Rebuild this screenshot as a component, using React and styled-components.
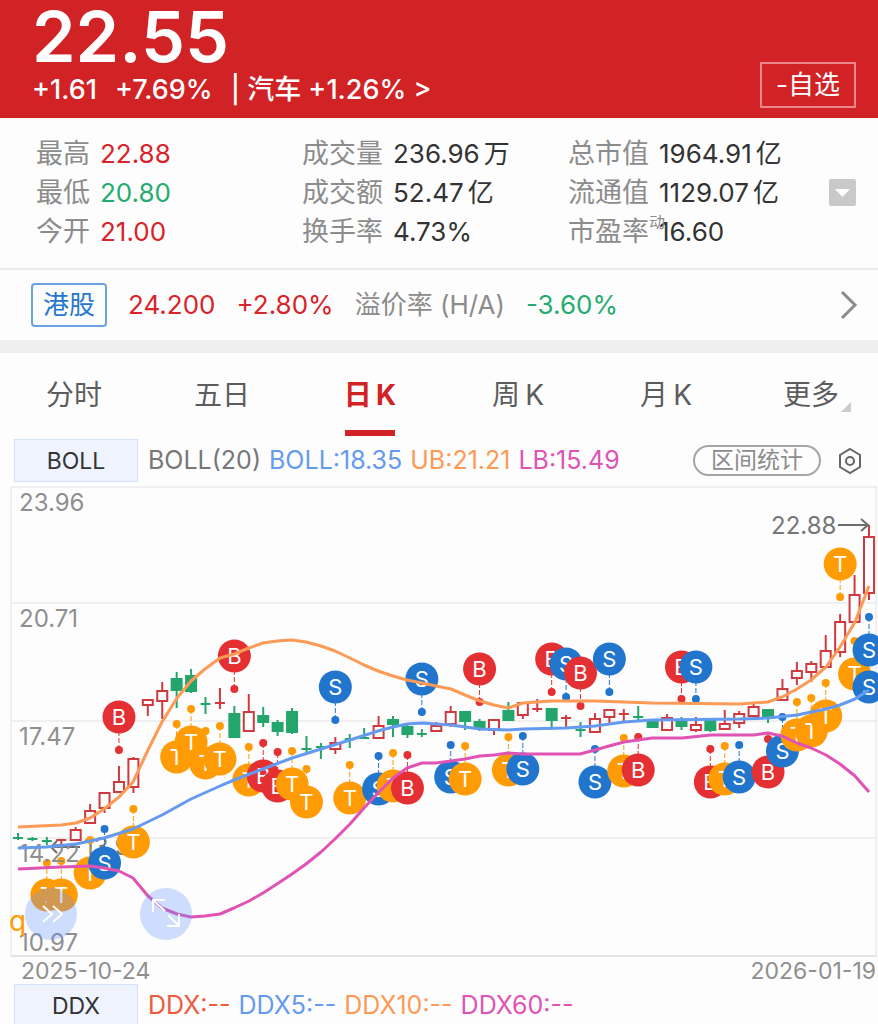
import React from "react";
import styled, { createGlobalStyle } from "styled-components";

const RED = "#cf3a3f";
const GREEN = "#23a56c";

const STATS = [
  [
    { label: "最高", value: "22.88", color: "#d8232a" },
    { label: "最低", value: "20.80", color: "#24ac70" },
    { label: "今开", value: "21.00", color: "#d8232a" },
  ],
  [
    { label: "成交量", value: "236.96", unit: "万" },
    { label: "成交额", value: "52.47", unit: "亿" },
    { label: "换手率", value: "4.73%" },
  ],
  [
    { label: "总市值", value: "1964.91", unit: "亿" },
    { label: "流通值", value: "1129.07", unit: "亿" },
    { label: "市盈率", note: "动", value: "16.60" },
  ],
];

const TABS = ["分时", "五日", "日K", "周K", "月K"];

const GRID = [
  { y: 487, label: "23.96" },
  { y: 603, label: "20.71" },
  { y: 721, label: "17.47" },
  { y: 838, label: "14.22" },
];

// [up, bodyTop, bodyBottom, high, low], one per trading day
const CANDLES = [
  [0, 838, 838, 833, 840],
  [0, 839, 839, 837, 841],
  [0, 841, 841, 837, 845],
  [1, 840, 840, 840, 845],
  [1, 830, 840, 827, 841],
  [1, 811, 823, 804, 823],
  [1, 793, 808, 793, 813],
  [1, 782, 792, 766, 792],
  [1, 759, 787, 757, 793],
  [1, 700, 705, 700, 716],
  [1, 691, 701, 682, 719],
  [0, 679, 690, 672, 708],
  [0, 676, 691, 669, 693],
  [0, 704, 704, 697, 714],
  [1, 703, 703, 688, 709],
  [0, 714, 737, 706, 738],
  [1, 712, 731, 694, 731],
  [0, 716, 722, 707, 727],
  [0, 723, 731, 720, 736],
  [0, 712, 732, 708, 734],
  [0, 749, 749, 736, 753],
  [0, 747, 747, 743, 759],
  [1, 743, 749, 737, 754],
  [0, 739, 739, 734, 748],
  [0, 738, 738, 728, 738],
  [1, 726, 738, 716, 738],
  [0, 720, 724, 716, 737],
  [0, 727, 734, 725, 738],
  [0, 734, 734, 729, 737],
  [1, 726, 731, 722, 732],
  [1, 712, 724, 706, 727],
  [0, 712, 721, 712, 730],
  [0, 722, 727, 719, 731],
  [1, 720, 730, 720, 735],
  [0, 711, 720, 702, 720],
  [1, 703, 715, 702, 719],
  [1, 709, 709, 699, 712],
  [0, 709, 720, 709, 730],
  [1, 718, 718, 715, 727],
  [0, 730, 730, 722, 737],
  [1, 719, 732, 713, 732],
  [1, 710, 717, 709, 723],
  [1, 714, 714, 709, 721],
  [0, 717, 717, 706, 720],
  [0, 721, 727, 719, 728],
  [1, 718, 730, 714, 730],
  [0, 721, 726, 717, 730],
  [1, 725, 730, 717, 732],
  [0, 721, 730, 721, 732],
  [1, 724, 729, 710, 729],
  [1, 714, 723, 711, 728],
  [1, 707, 716, 704, 719],
  [0, 710, 718, 710, 723],
  [1, 689, 700, 679, 701],
  [1, 671, 678, 662, 685],
  [1, 664, 672, 661, 682],
  [1, 651, 667, 635, 667],
  [1, 622, 652, 614, 657],
  [1, 595, 622, 575, 622],
  [1, 537, 593, 525, 600],
];

// [kind, day, badge y, dot y]
const MARKERS = [
  ["T", 2, 895, 863],
  ["T", 3, 895, 861],
  ["T", 5, 873, 840],
  ["S", 6, 863, 829],
  ["B", 7, 717, 750],
  ["T", 8, 842, 809],
  ["T", 11, 757, 724],
  ["T", 12, 742, 709],
  ["T", 13, 763, 731],
  ["T", 14, 759, 726],
  ["B", 15, 656, 689],
  ["T", 16, 780, 747],
  ["B", 17, 776, 743],
  ["B", 18, 786, 752],
  ["T", 19, 784, 751],
  ["T", 20, 802, 769],
  ["S", 22, 687, 720],
  ["T", 23, 798, 765],
  ["S", 25, 789, 756],
  ["T", 26, 786, 753],
  ["B", 27, 788, 755],
  ["S", 28, 679, 712],
  ["S", 30, 777, 745],
  ["T", 31, 779, 746],
  ["B", 32, 669, 702],
  ["T", 34, 770, 737],
  ["S", 35, 769, 736],
  ["B", 37, 659, 692],
  ["S", 38, 664, 697],
  ["B", 39, 673, 706],
  ["S", 40, 782, 749],
  ["S", 41, 659, 692],
  ["T", 42, 771, 738],
  ["B", 43, 770, 737],
  ["B", 46, 667, 699],
  ["S", 47, 667, 699],
  ["B", 48, 782, 749],
  ["T", 49, 779, 746],
  ["S", 50, 777, 745],
  ["B", 52, 772, 739],
  ["S", 53, 751, 717],
  ["T", 54, 735, 702],
  ["T", 55, 731, 698],
  ["T", 56, 716, 683],
  ["T", 57, 564, 597],
  ["T", 58, 674, 641],
  ["S", 59, 650, 617],
  ["S", 59, 687, 676],
];

const MARKER_COLORS = { B: "#e43033", S: "#2275cd", T: "#ff9b05" };

const BANDS = [
  {
    color: "#649af0",
    points:
      "18,848 46,847 76,844 104,838 133,829 162,815 191,799 220,786 234,780 263,769 292,758 321,749 350,740 378,731 393,727 407,724 422,723 451,725 480,729 508,730 523,729 566,728 595,726 624,722 652,720 740,719 768,718 797,715 826,709 840,705 855,699 869,690",
  },
  {
    color: "#fd9a55",
    points:
      "18,827 61,825 76,823 90,818 104,809 119,797 133,782 148,750 162,722 177,698 191,681 205,669 220,658 234,654 249,648 263,643 277,641 292,640 306,642 321,646 335,651 350,658 364,665 378,671 393,676 407,680 422,683 436,686 451,689 465,695 480,701 494,705 508,708 523,703 551,701 595,701 652,703 740,704 768,702 782,697 797,689 811,680 826,667 840,647 855,622 869,586",
  },
  {
    color: "#e053b5",
    points:
      "18,869 61,867 90,866 104,868 119,871 133,878 148,896 162,908 177,914 191,917 205,916 220,914 234,908 249,901 263,893 277,884 292,874 306,864 321,852 335,839 350,824 364,808 378,793 393,778 407,768 422,763 436,763 451,761 465,759 480,756 494,755 508,753 523,754 580,754 595,750 609,746 624,742 638,740 652,738 682,738 711,735 754,735 768,733 782,736 797,743 811,748 826,755 840,764 855,776 869,792",
  },
];

const dayX = (i) => 18 + (i * 851) / 59;

const Candle = ({ day, data }) => {
  const [up, top, bottom, high, low] = data;
  const x = dayX(day);
  const color = up ? RED : GREEN;
  const flat = top === bottom;
  return (
    <g stroke={color} strokeWidth="2">
      <line x1={x} x2={x} y1={high} y2={flat ? low : top} />
      {flat ? (
        <line x1={x - 5} x2={x + 5} y1={top} y2={top} />
      ) : (
        <>
          <line x1={x} x2={x} y1={bottom} y2={low} />
          <rect x={x - 5} y={top} width="10" height={bottom - top} fill={up ? "#fdfdfd" : GREEN} />
        </>
      )}
    </g>
  );
};

const Marker = ({ kind, day, y, dot }) => {
  const x = dayX(day);
  const color = MARKER_COLORS[kind];
  return (
    <g fill={color}>
      <line x1={x} x2={x} y1={y} y2={dot} stroke={color} strokeDasharray="5 2" />
      <circle cx={x} cy={dot} r="4" />
      <circle cx={x} cy={y} r="16.500" />
      <MarkerText x={x} y={y + 8}>
        {kind}
      </MarkerText>
    </g>
  );
};

class App extends React.Component {
  state = { tab: "日K" };

  renderChart() {
    return (
      <ChartArea>
        <ChartSvg viewBox="0 486 878 472" role="img" aria-label="日K BOLL">
          <g stroke="#e3e3e5">
            {GRID.map((g) => (
              <line key={g.y} x1="11" x2="877" y1={g.y} y2={g.y} />
            ))}
            <line x1="11" x2="877" y1="956" y2="956" strokeWidth="2" />
            <line x1="11" x2="11" y1="487" y2="956" />
            <line x1="876" x2="876" y1="487" y2="956" />
          </g>
          {CANDLES.map((c, i) => (
            <Candle key={i} day={i} data={c} />
          ))}
          <g stroke="#6c6c6c" strokeWidth="2" fill="none">
            <path d="M838 525H868M861 519L868 525L861 531" />
            <path d="M80 847H51M57 841L51 847L57 853" />
          </g>
          <AxisText x="771" y="534" fill="#777">22.88</AxisText>
          <AxisText x="84" y="855" fill="#777">13.97</AxisText>
          {MARKERS.map(([kind, day, y, dot], i) => (
            <Marker key={i} kind={kind} day={day} y={y} dot={dot} />
          ))}
          {GRID.map((g) => (
            <AxisText key={g.label} x="19" y={g.y + 24}>
              {g.label}
            </AxisText>
          ))}
          <AxisText x="19" y="951">10.97</AxisText>
          <ClippedMark x="9" y="931">q</ClippedMark>
          {BANDS.map((b) => (
            <polyline
              key={b.color}
              points={b.points}
              fill="none"
              stroke={b.color}
              strokeWidth="3"
              strokeLinejoin="round"
            />
          ))}
        </ChartSvg>
        <ChartTools>
          <RoundButton aria-label="展开">
            <svg width="52" height="52" fill="none" stroke="#fff" strokeWidth="2">
              <path d="M18 18L27 26L18 34M28 18L37 26L28 34" />
            </svg>
          </RoundButton>
          <RoundButton aria-label="全屏">
            <svg width="52" height="52" fill="none" stroke="#fff" strokeWidth="2">
              <path d="M13 24V12H25M13 12L25 23M28 27L39 38M39 26V38H27" />
            </svg>
          </RoundButton>
        </ChartTools>
      </ChartArea>
    );
  }

  render() {
    const { tab } = this.state;
    return (
      <Page>
        <GlobalStyle />
        <Header>
          <div>
            <Price>22.55</Price>
            <Change>
              <span>+1.61</span>
              <span>+7.69%</span>
              <Sector href="#sector">| 汽车 +1.26% &gt;</Sector>
            </Change>
          </div>
          <WatchButton>-自选</WatchButton>
        </Header>

        <Stats>
          <StatGrid>
            {STATS.map((col, i) => (
              <div key={i}>
                {col.map((s) => (
                  <Stat key={s.label}>
                    <StatLabel>
                      {s.label}
                      {s.note && <Note>{s.note}</Note>}
                    </StatLabel>
                    <StatValue $color={s.color}>
                      {s.value}
                      {s.unit && <Unit>{s.unit}</Unit>}
                    </StatValue>
                  </Stat>
                ))}
              </div>
            ))}
          </StatGrid>
          <MoreButton aria-label="更多数据">
            <svg width="27" height="27">
              <path d="M6 10H21L13.500 18Z" fill="#fff" />
            </svg>
          </MoreButton>
        </Stats>

        <HkRow href="#hk">
          <HkBadge>港股</HkBadge>
          <Quote $color="#d8232a">24.200</Quote>
          <Quote $color="#d8232a">+2.80%</Quote>
          <Quote $color="#8c8c8c">溢价率 (H/A)</Quote>
          <Quote $color="#24ac70">-3.60%</Quote>
          <Chevron width="18" height="30" fill="none" stroke="#8c8c8c" strokeWidth="3">
            <path d="M2 2L15 15L2 28" />
          </Chevron>
        </HkRow>

        <Tabs>
          {TABS.map((t) => (
            <Tab key={t} $active={t === tab} onClick={() => this.setState({ tab: t })}>
              {t.replace("K", "\u2009K")}
            </Tab>
          ))}
          <MoreTab>
            更多
            <Corner />
          </MoreTab>
        </Tabs>

        <IndicatorRow>
          <IndicatorButton>BOLL</IndicatorButton>
          <Legend>
            <LegendItem $color="#777">BOLL(20)</LegendItem>
            <LegendItem $color="#649af0">BOLL:18.35</LegendItem>
            <LegendItem $color="#fd9a55">UB:21.21</LegendItem>
            <LegendItem $color="#e053b5">LB:15.49</LegendItem>
          </Legend>
          <RangeButton>区间统计</RangeButton>
          <SettingsButton aria-label="设置">
            <svg width="26" height="28" fill="none" stroke="#666" strokeWidth="2">
              <path d="M13 2L23 8V20L13 26L3 20V8Z" />
              <circle cx="13" cy="14" r="4" />
            </svg>
          </SettingsButton>
        </IndicatorRow>

        {this.renderChart()}

        <Dates>
          <span>2025-10-24</span>
          <span>2026-01-19</span>
        </Dates>

        <DdxRow>
          <IndicatorButton>DDX</IndicatorButton>
          <Legend>
            <LegendItem $color="#ee5a3c">DDX:--</LegendItem>
            <LegendItem $color="#649af0">DDX5:--</LegendItem>
            <LegendItem $color="#fd9a55">DDX10:--</LegendItem>
            <LegendItem $color="#e053b5">DDX60:--</LegendItem>
          </Legend>
        </DdxRow>
      </Page>
    );
  }
}

export default App;

const GlobalStyle = createGlobalStyle`
  * {
    box-sizing: border-box;
  }
  body {
    margin: 0;
    background: #fdfdfd;
    font-family: Inter, "Noto Sans CJK SC", sans-serif;
  }
  button {
    margin: 0;
    padding: 0;
    border: 0;
    background: none;
    font-family: inherit;
    cursor: pointer;
  }
  a {
    color: inherit;
    text-decoration: none;
  }
`;

const Page = styled.main`
  width: 100%;
`;

const Header = styled.header`
  display: flex;
  justify-content: space-between;
  align-items: flex-end;
  padding: 2px 22px 10px 32px;
  background: #d12326;
  color: #fff;
`;

const Price = styled.div`
  font-size: 70px;
  font-weight: 600;
  line-height: 70px;
`;

const Change = styled.div`
  display: flex;
  gap: 18px;
  font-size: 27px;
  font-weight: 500;
  line-height: 36px;
  white-space: nowrap;
`;

const Sector = styled.a``;

const WatchButton = styled.button`
  height: 46px;
  width: 96px;
  border: 2px solid #e9868a;
  color: #fff;
  font-size: 26px;
  line-height: 42px;
`;

const Stats = styled.section`
  display: flex;
  align-items: center;
  padding: 16px 22px 17px 36px;
  border-bottom: 2px solid #ebebec;
`;

const StatGrid = styled.div`
  flex: 1;
  display: grid;
  grid-template-columns: 1fr 1fr 261px;
`;

const Stat = styled.div`
  display: flex;
  gap: 10px;
  font-size: 26px;
  line-height: 39px;
  white-space: nowrap;
`;

const StatLabel = styled.span`
  position: relative;
  color: #8c8c8c;
  font-size: 27px;
`;

const StatValue = styled.span`
  color: ${(p) => p.$color || "#333"};
`;

const Unit = styled.span`
  margin-left: 4px;
`;

const Note = styled.sup`
  position: absolute;
  left: 100%;
  top: 0;
  font-size: 16px;
  line-height: 20px;
`;

const MoreButton = styled.button`
  display: flex;
  width: 27px;
  height: 27px;
  border-radius: 2px;
  background: #c9c9c9;
`;

const HkRow = styled.a`
  display: flex;
  align-items: center;
  gap: 21px;
  height: 83px;
  padding: 0 20px 0 31px;
  border-bottom: 13px solid #efefef;
  white-space: nowrap;
`;

const HkBadge = styled.span`
  width: 76px;
  height: 44px;
  border: 2px solid #6ba3e2;
  border-radius: 4px;
  color: #2477ce;
  font-size: 26px;
  line-height: 40px;
  text-align: center;
`;

const Quote = styled.span`
  color: ${(p) => p.$color};
  font-size: 26px;
  line-height: 40px;
`;

const Chevron = styled.svg`
  margin-left: auto;
`;

const Tabs = styled.nav`
  display: flex;
  height: 84px;
`;

const Tab = styled.button`
  position: relative;
  flex: 1;
  color: ${(p) => (p.$active ? "#d12326" : "#5c5c5c")};
  font-size: 28px;
  font-weight: ${(p) => (p.$active ? 700 : 400)};
  line-height: 84px;

  &::after {
    content: "";
    display: ${(p) => (p.$active ? "block" : "none")};
    position: absolute;
    left: calc(50% - 25px);
    bottom: 1px;
    width: 50px;
    height: 6px;
    background: #d12326;
  }
`;

const MoreTab = styled.button`
  display: flex;
  align-items: center;
  gap: 2px;
  width: 138px;
  padding-left: 43px;
  color: #5c5c5c;
  font-size: 28px;
  line-height: 84px;
`;

const Corner = styled.span`
  margin-top: 24px;
  border-left: 10px solid transparent;
  border-bottom: 10px solid #ccc;
`;

const IndicatorRow = styled.div`
  display: flex;
  align-items: center;
  height: 49px;
  padding: 2px 15px 4px 14px;
`;

const IndicatorButton = styled.button`
  flex: none;
  width: 124px;
  height: 43px;
  border: 1px solid #d3e1fa;
  background: #eff3fe;
  color: #333;
  font-size: 23px;
`;

const Legend = styled.div`
  display: flex;
  gap: 8px;
  margin: 0 auto 0 10px;
  line-height: 43px;
  white-space: nowrap;
`;

const LegendItem = styled.span`
  color: ${(p) => p.$color};
  font-size: 25px;
`;

const RangeButton = styled.button`
  width: 128px;
  height: 31px;
  border: 2px solid #a5a5a5;
  border-radius: 16px;
  color: #8c8c8c;
  font-size: 23px;
  line-height: 25px;
`;

const SettingsButton = styled.button`
  display: flex;
  margin-left: 16px;
`;

const ChartArea = styled.section`
  position: relative;
`;

const ChartSvg = styled.svg`
  display: block;
  width: 100%;
`;

const AxisText = styled.text`
  fill: ${(p) => p.fill || "#8f8f8f"};
  font-size: 24px;
`;

const ClippedMark = styled.text`
  fill: #ff9b05;
  font-size: 28px;
`;

const MarkerText = styled.text`
  fill: #fff;
  font-size: 22px;
  text-anchor: middle;
`;

const ChartTools = styled.div`
  position: absolute;
  left: 25px;
  bottom: 18px;
  display: flex;
  gap: 63px;
`;

const RoundButton = styled.button`
  display: flex;
  width: 52px;
  height: 52px;
  border-radius: 50%;
  background: rgba(98, 146, 255, 0.3);
`;

const Dates = styled.div`
  display: flex;
  justify-content: space-between;
  padding: 0 2px 0 21px;
  color: #8f8f8f;
  font-size: 23px;
  line-height: 26px;
`;

const DdxRow = styled.div`
  display: flex;
  align-items: flex-start;
  height: 40px;
  padding-left: 14px;
  overflow: hidden;
`;
